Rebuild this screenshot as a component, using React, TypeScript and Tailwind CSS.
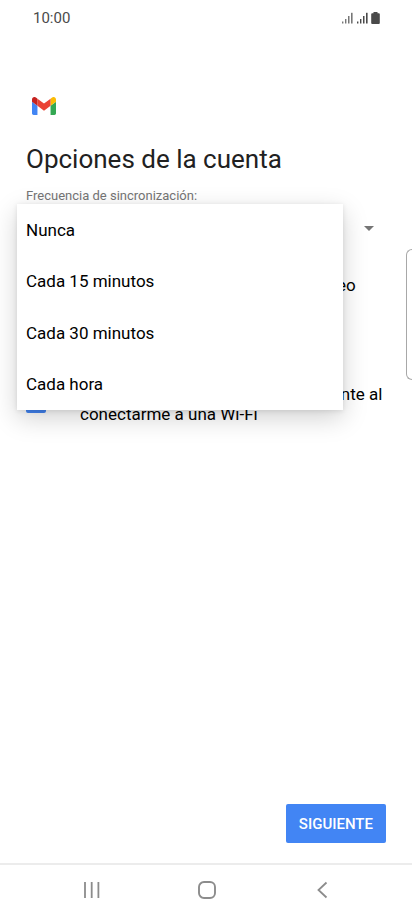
import { useState } from "react";

const frequencies = ["Nunca", "Cada 15 minutos", "Cada 30 minutos", "Cada hora"];

const options = [
  { id: "notify", label: "Notificarme cuando reciba un correo" },
  { id: "sync", label: "Sincronizar correo de la cuenta" },
  { id: "attachments", label: "Descargar adjuntos automáticamente al conectarme a una Wi-Fi" },
];

function Signal({ className }: { className: string }) {
  return (
    <svg viewBox="0 0 11 12" className={"h-3 w-[11px] " + className} fill="currentColor" aria-hidden="true">
      <rect x="0" y="9.5" width="1.4" height="2" />
      <rect x="3" y="7" width="1.4" height="4.5" />
      <rect x="6" y="4" width="1.5" height="7.5" />
      <rect x="9" y="0.8" width="1.6" height="10.7" />
    </svg>
  );
}

function StatusBar() {
  return (
    <header className="flex h-9 items-center justify-between pr-8 pl-[33px] text-[#4a4a4a]">
      <span className="text-[15px] leading-5">10:00</span>
      <span className="flex items-center">
        <Signal className="mr-1 text-[#777777]" />
        <Signal className="mr-[3px] text-[#4a4a4a]" />
        <svg viewBox="0 0 9 12" className="h-3 w-[9px]" fill="currentColor" aria-hidden="true">
          <path d="M2.5 0h4v1.2h1.3q1 0 1 1V11q0 1-1 1H1.2q-1 0-1-1V2.2q0-1 1-1h1.3z" />
        </svg>
      </span>
    </header>
  );
}

function GmailLogo() {
  return (
    <svg viewBox="52 42 88 66" className="ml-1.5 h-[18px] w-6" role="img" aria-label="Gmail">
      <path fill="#4285f4" d="M58 108h14V74L52 59v43c0 3.32 2.69 6 6 6" />
      <path fill="#34a853" d="M120 108h14c3.32 0 6-2.69 6-6V59l-20 15" />
      <path fill="#fbbc04" d="M120 48v26l20-15v-8c0-7.42-8.47-11.65-14.4-7.2" />
      <path fill="#ea4335" d="M72 74V48l24 18 24-18v26L96 92" />
      <path fill="#c5221f" d="M52 51v8l20 15V48l-5.6-4.2c-5.94-4.45-14.4-.22-14.4 7.2" />
    </svg>
  );
}

function SyncFrequency() {
  const [value, setValue] = useState("Nunca");
  return (
    <div className="relative">
      <label htmlFor="frequency" className="block text-[13px] leading-[18px] text-[#757575]">
        Frecuencia de sincronización:
      </label>
      <div className="flex h-[46px] items-center">
        <select
          id="frequency"
          value={value}
          onChange={(e) => setValue(e.target.value)}
          className="h-full min-w-0 flex-1 appearance-none bg-transparent text-[17px] text-black"
        >
          {frequencies.map((f) => (
            <option key={f}>{f}</option>
          ))}
        </select>
        <svg viewBox="0 0 10 5" className="mr-3 h-[5px] w-2.5" fill="#757575" aria-hidden="true">
          <path d="M0 0h10L5 5z" />
        </svg>
      </div>
      <div
        role="listbox"
        aria-label="Frecuencia de sincronización"
        className="absolute top-[17px] right-[43px] -left-[9px] z-10 grid h-[206px] grid-rows-4 bg-white shadow-[0_8px_24px_rgba(0,0,0,0.18),0_1px_5px_rgba(0,0,0,0.1)]"
      >
        {frequencies.map((f) => (
          <button
            key={f}
            type="button"
            role="option"
            aria-selected={f === value}
            onClick={() => setValue(f)}
            className="px-[9px] text-left text-[17px] leading-6 text-black"
          >
            {f}
          </button>
        ))}
      </div>
    </div>
  );
}

export default function App() {
  return (
    <div className="relative flex min-h-screen flex-col overflow-hidden bg-white font-[Roboto,sans-serif]">
      <StatusBar />
      <main className="flex flex-1 flex-col px-[26px] pt-[61px]">
        <GmailLogo />
        <h1 className="mt-7 mb-3 text-[26px] leading-8 text-[#212121]">Opciones de la cuenta</h1>
        <SyncFrequency />
        <div className="mt-[23px] flex flex-col gap-[33px]">
          {options.map((o) => (
            <label key={o.id} htmlFor={o.id} className="flex items-center text-[17px] leading-5 text-black">
              <input
                id={o.id}
                type="checkbox"
                defaultChecked
                className="mr-[34px] mb-0.5 size-5 shrink-0 appearance-none rounded-xs border-2 border-[#757575] checked:border-[#4285f4] checked:bg-[#4285f4]"
              />
              <span>{o.label}</span>
            </label>
          ))}
        </div>
        <button
          type="button"
          className="mt-auto mb-5 h-[39px] self-end rounded-xs bg-[#4285f4] px-[13px] pt-0.5 text-[15px] font-medium text-white"
        >
          SIGUIENTE
        </button>
      </main>
      <aside className="absolute top-[249px] right-0 h-[131px] w-1.5 rounded-l-md border border-r-0 border-[#a8a8a8] bg-white" />
      <nav className="flex h-[52px] items-center justify-between border-t-2 border-[#ececec] pr-20 pl-[82px] text-[#8c8c8c]">
        <button type="button" aria-label="Recientes">
          <svg viewBox="0 0 20 20" className="size-5" stroke="currentColor" strokeWidth="1.8" fill="none">
            <path d="M3 2v16M9.7 2v16M16.4 2v16" />
          </svg>
        </button>
        <button type="button" aria-label="Inicio">
          <svg viewBox="0 0 20 20" className="size-5" stroke="currentColor" strokeWidth="1.9" fill="none">
            <rect x="2" y="2" width="16" height="16" rx="5" />
          </svg>
        </button>
        <button type="button" aria-label="Atrás">
          <svg viewBox="0 0 20 20" className="size-5" stroke="currentColor" strokeWidth="1.8" fill="none">
            <path d="M14.5 2.5L6.500 10l8 7.500" />
          </svg>
        </button>
      </nav>
    </div>
  );
}
